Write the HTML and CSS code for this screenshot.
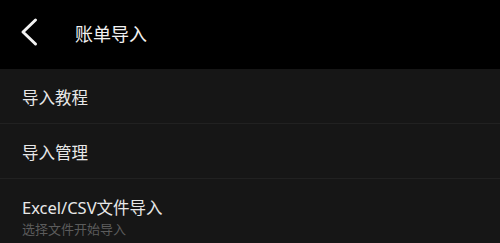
FILE: index.html
```html
<!DOCTYPE html>
<html lang="zh-CN">
<head>
<meta charset="utf-8">
<link rel="stylesheet" href="styles.css">
</head>
<body>
<header class="nav">
  <svg class="back" width="18" height="30" viewBox="0 0 18 30">
    <path d="M15.5 3 L3 15 L15.5 27" fill="none" stroke="#f2f2f2" stroke-width="3" stroke-linecap="round" stroke-linejoin="round"/>
  </svg>
  <h1 class="title">账单导入</h1>
</header>
<ul class="list">
  <li class="item"><span class="item-title">导入教程</span></li>
  <li class="item"><span class="item-title">导入管理</span></li>
  <li class="item item-sub">
    <span class="item-title">Excel/CSV文件导入</span>
    <span class="item-desc">选择文件开始导入</span>
  </li>
</ul>
</body>
</html>
```
FILE: styles.css
```css
html, body {
  margin: 0;
  padding: 0;
  background: #161616;
  font-family: "Noto Sans", "Noto Sans CJK SC", sans-serif;
  overflow: hidden;
}
.nav {
  height: 69px;
  background: #000;
  display: flex;
  align-items: center;
  padding-left: 20px;
  box-sizing: border-box;
}
.back {
  display: block;
  margin-top: -6px;
}
.title {
  margin: -4px 0 0 37px;
  font-size: 18px;
  font-weight: 400;
  color: #f2f2f2;
}
.list {
  list-style: none;
  margin: 0;
  padding: 0;
}
.item {
  height: 55px;
  border-bottom: 1px solid #212121;
  padding: 3px 0 0 22px;
  display: flex;
  flex-direction: column;
  justify-content: center;
  box-sizing: border-box;
}
.item-title {
  font-size: 16.5px;
  color: #e8e8e8;
  line-height: 22px;
}
.item-sub {
  height: auto;
  justify-content: flex-start;
  padding-top: 18px;
  border-bottom: none;
}
.item-desc {
  font-size: 13px;
  color: #5c5c5c;
  line-height: 18px;
  margin-top: 1px;
}
```
